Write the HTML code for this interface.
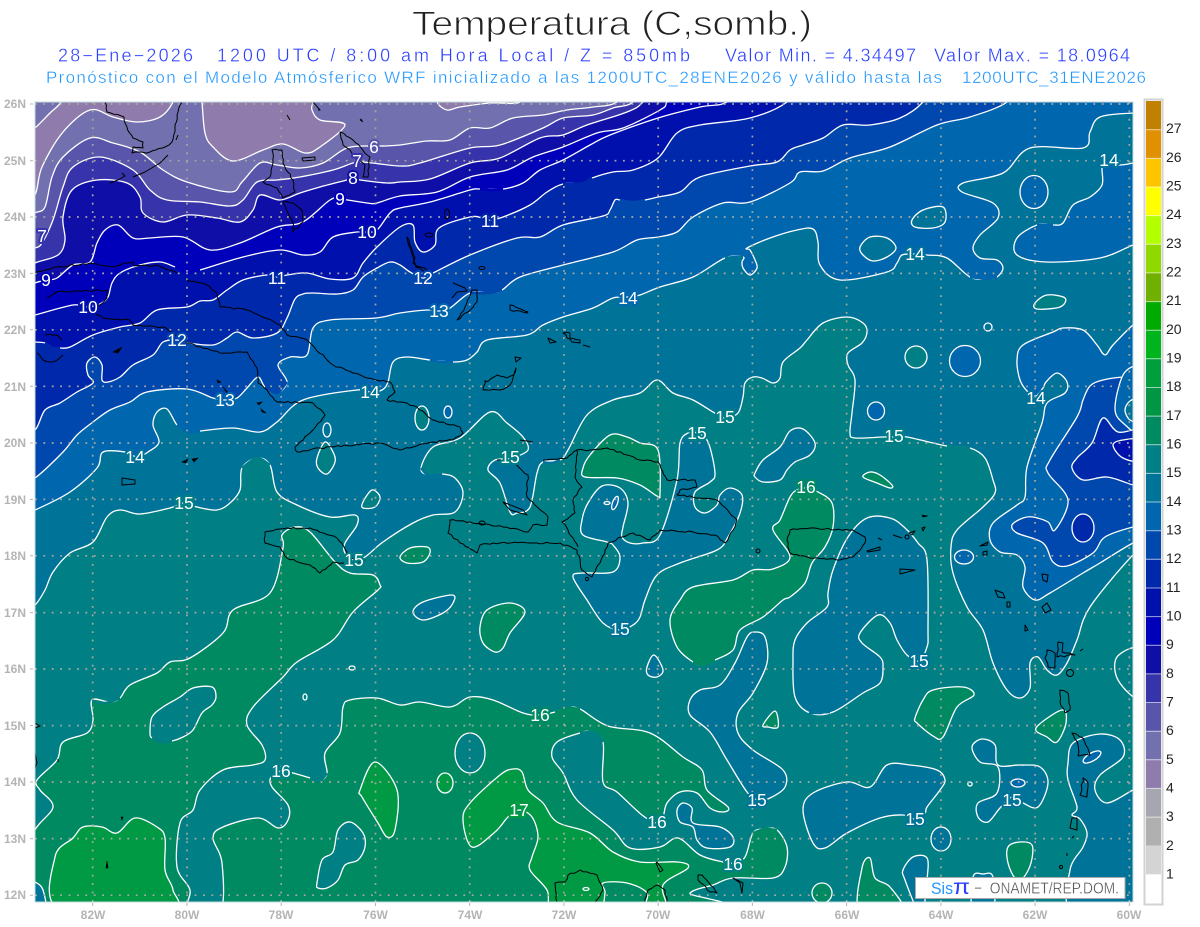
<!DOCTYPE html>
<html lang="es"><head><meta charset="utf-8"><title>Temperatura</title>
<style>
html,body{margin:0;padding:0;background:#fff}
svg{display:block;font-family:"Liberation Sans",sans-serif}
.s{stroke:#fff;stroke-width:1.3;stroke-linejoin:round}
.e{fill:none;stroke-width:2.4;stroke-linecap:butt}
.c4{fill:#8f7bac}.c5{fill:#7270ae}.c6{fill:#5855ab}.c7{fill:#3733aa}.c8{fill:#0f0fa8}.c9{fill:#0000bb}
.c10{fill:#0010ac}.c11{fill:#0028aa}.c12{fill:#0048ae}.c13{fill:#0066ae}.c14{fill:#007399}.c15{fill:#007f85}
.c16{fill:#008a62}.c17{fill:#009a45}
.no{fill:none}
.k{fill:none;stroke:#000;stroke-width:1;stroke-linejoin:round}
.kf{fill:#000;stroke:#000;stroke-width:.6}
.g{stroke:#aaa9a0;stroke-width:1.7;stroke-dasharray:1.8 6.6;fill:none}
.n{fill:#fff;font-size:17.5px;text-anchor:middle;paint-order:stroke;stroke-width:4;stroke-linejoin:round}
.ax{fill:#b4b4b4;font-size:12px;font-weight:bold}
.axb{fill:#b4b4b4;font-size:12px;font-weight:bold;text-anchor:middle}
.cb{fill:#222;font-size:14px}
.t{white-space:pre}
</style></head><body>
<svg width="1200" height="927" viewBox="0 0 1200 927" xmlns="http://www.w3.org/2000/svg">
<defs><clipPath id="c"><rect x="35" y="102" width="1098" height="800"/></clipPath></defs>
<text x="412" y="35" font-size="34" fill="#222" stroke="#fff" stroke-width=".9" textLength="400" lengthAdjust="spacingAndGlyphs">Temperatura (C,somb.)</text>
<g font-size="18" fill="#2a40ff" stroke="#fff" stroke-width=".35">
<text x="58" y="61.5" textLength="135">28−Ene−2026</text>
<text x="217" y="61.5" textLength="473">1200 UTC / 8:00 am Hora Local / Z = 850mb</text>
<text x="725" y="61.5" textLength="191">Valor Min. = 4.34497</text>
<text x="934" y="61.5" textLength="196">Valor Max. = 18.0964</text>
</g>
<g font-size="17" fill="#1e96ff" stroke="#fff" stroke-width=".35">
<text x="46" y="83" textLength="896">Pronóstico con el Modelo Atmósferico WRF inicializado a las 1200UTC_28ENE2026 y válido hasta las</text>
<text x="962" y="83" textLength="184">1200UTC_31ENE2026</text>
</g>

<g clip-path="url(#c)">
<rect x="35" y="102" width="1098" height="800" class="c15"/>
<!-- T>16 main -->
<path class="s c16" d="M45,912 43,890 33,884 28,860 35,830 53,807 40,790 37,780 57,760 63,742 87,733 93,720 92,700 110,702 120,698 130,685 157,673 170,662 190,658 223,633 233,610 270,593 283,548 282,535 295,527 310,532 335,562 350,573 373,575 380,585 378,590 353,612 333,640 297,662 283,677 253,707 247,725 262,745 265,760 253,765 223,770 200,790 193,810 180,823 177,867 190,890 187,912 220,912 222,863 213,838 223,827 258,818 278,828 288,820 288,805 272,787 271,777 281,771 293,773 310,778 320,781 327,773 325,753 340,733 343,707 350,700 377,698 400,705 420,702 450,707 470,697 493,700 523,713 540,715 555,712 568,708 580,709 608,726 650,733 683,757 702,770 707,790 728,807 723,812 710,808 697,793 680,792 667,803 663,817 657,823 642,815 617,792 603,782 603,742 590,732 580,733 557,742 552,757 563,773 577,800 613,830 630,848 660,847 678,838 700,855 723,862 733,863 745,857 753,833 765,829 777,830 787,847 785,867 773,878 733,878 713,885 690,893 685,912Z"/>
<path class="s c15" d="M150,733 152,717 163,707 180,697 193,688 212,687 216,697 212,705 202,713 193,730 183,737 172,741 160,742 152,738Z"/>
<path class="s c15" d="M317,883 322,860 333,852 338,830 350,822 363,833 365,847 358,860 345,865 338,880 327,888 318,888Z"/>
<ellipse class="s c15" cx="470" cy="753" rx="15" ry="20"/>
<ellipse class="s c17" cx="445" cy="783" rx="8" ry="10"/>
<path class="s c17" d="M60,910 55,857 73,838 83,827 102,827 117,833 135,818 157,827 165,838 165,870 173,890 170,910Z"/>
<path class="s c17" d="M360,790 375,762 397,790 395,830 387,837 378,823 362,797Z"/>
<path class="s c17" d="M463,820 470,803 500,775 513,769 522,772 528,790 543,803 557,822 590,833 613,852 640,862 678,862 688,868 663,885 667,910 645,910 647,893 627,883 603,883 605,893 597,910 553,910 547,890 530,870 532,857 538,837 532,817 519,810 508,817 495,832 472,847Z"/>
<!-- T<15 -->
<path class="s c14" d="M25,607 35,605 45,590 53,572 70,553 93,542 107,517 120,510 140,514 170,508 184,503 197,507 217,510 230,503 240,490 242,468 257,458 270,465 277,492 297,505 330,517 355,515 357,525 345,543 345,553 354,560 365,557 383,542 413,523 433,515 455,512 463,493 455,478 442,474 428,475 421,468 433,447 460,438 490,412 507,423 523,437 528,450 512,458 495,460 488,470 500,483 510,512 517,513 530,507 537,473 543,462 560,460 568,450 587,415 613,400 640,393 657,380 673,393 693,400 713,412 725,418 738,413 743,397 745,383 753,377 762,378 773,383 780,378 783,362 800,348 807,340 823,323 847,317 863,323 867,332 862,343 848,353 848,365 855,380 852,413 850,433 855,438 883,437 895,437 907,437 947,446 970,448 985,458 993,480 995,493 983,507 957,530 951,547 953,573 967,607 983,630 993,663 1007,690 1020,698 1030,688 1030,663 1038,657 1047,670 1057,675 1067,663 1077,640 1090,607 1133,555 1150,545 1150,80 20,80 20,607Z"/>
<path class="s c14" d="M573,577 587,600 603,623 620,630 633,625 640,617 645,600 657,575 680,563 717,550 728,537 740,513 742,495 730,488 720,495 717,505 705,513 695,507 695,492 710,482 715,473 708,442 697,433 688,433 680,443 677,480 660,535 643,543 630,543 622,537 623,527 628,503 620,488 602,486 588,503 582,520 583,535 607,542 613,545 620,557 613,572 583,573Z"/>
<path class="s c14" d="M755,473 763,460 780,447 790,431 803,429 815,443 810,455 795,462 787,470 780,480 763,482 755,477Z"/>
<path class="s c14" d="M793,660 795,697 810,713 833,712 863,693 880,683 883,667 880,657 862,643 860,633 878,615 890,623 897,640 907,655 919,661 927,647 928,630 927,560 918,543 905,528 890,518 867,518 848,537 833,570 828,593 827,607 807,623 795,640Z"/>
<path class="s c14" d="M413,612 423,602 452,595 453,603 443,613 423,620Z"/>
<path class="s c14" d="M647,667 654,655 663,670 657,677 648,675Z"/>
<path class="s c14" d="M765,637 767,663 753,693 738,713 738,733 753,750 783,770 785,787 770,798 758,800 747,792 727,760 710,732 690,715 690,700 700,690 720,685 735,663 747,637 755,632Z"/>
<path class="s c14" d="M677,810 683,803 692,808 693,823 720,827 733,837 730,847 707,848 697,840 693,827 680,822Z"/>
<path class="s c14" d="M803,810 813,793 847,782 870,787 887,765 910,765 937,770 945,780 940,790 927,807 925,813 915,819 903,815 880,818 847,833 825,848 813,843Z"/>
<path class="s c14" d="M972,747 982,739 995,745 998,765 1020,765 1040,767 1048,783 1038,807 1023,803 1012,797 1000,808 988,822 978,817 978,803 997,793 998,767 980,762Z"/>
<path class="s c14" d="M1145,785 1133,790 1107,803 1095,790 1100,775 1123,757 1120,740 1100,734 1073,743 1068,763 1068,780 1077,807 1072,815 1080,819 1087,833 1083,847 1070,870 1073,912 1145,912Z"/>
<path class="s c14" d="M903,870 913,857 927,858 927,880 923,912 918,912 905,880Z"/>
<ellipse class="s c14" cx="941" cy="839" rx="10" ry="12"/>
<path class="s c14" d="M973,877 983,874 993,877 993,912 973,912Z"/>
<path class="s c14" d="M35,882 43,890 45,912 25,912 25,880Z"/>
<!-- warm holes in T<15 -->
<path class="s c15" d="M317,458 325,442 333,452 335,462 327,474 318,468Z"/>
<path class="s c15" d="M363,502 372,490 380,497 375,507 363,508Z"/>
<ellipse class="s c15" cx="422" cy="418" rx="7" ry="12"/>
<ellipse class="s no" cx="327" cy="430" rx="4" ry="7"/>
<path class="s c15" d="M1140,650 1117,657 1118,680 1140,698Z"/>
<ellipse class="s c13" cx="448" cy="412" rx="4" ry="6"/>
<ellipse class="s c13" cx="876" cy="411" rx="8.5" ry="9"/>
<ellipse class="s c13" cx="964" cy="557" rx="9.5" ry="7"/>
<ellipse class="s c13" cx="1018" cy="783" rx="7" ry="4"/>
<ellipse class="s c13" cx="1092" cy="757" rx="10" ry="4" transform="rotate(-30 1092 757)"/>
<ellipse class="s c13" cx="615" cy="503" rx="2.5" ry="7" transform="rotate(20 615 503)"/>
<ellipse class="s no" cx="607" cy="503" rx="3" ry="1.5"/>
<ellipse class="s no" cx="970" cy="784" rx="2.2" ry="2"/>
<!-- warm T>16 blobs -->
<path class="s c16" d="M790,557 773,569 753,570 733,580 693,587 680,600 670,620 677,647 693,662 702,665 715,660 733,650 740,630 763,617 783,600 790,597 805,583 812,563 825,547 833,527 832,503 818,492 806,488 797,490 790,497 780,520 773,530Z"/>
<path class="s c16" d="M583,468 590,455 610,435 627,437 640,443 658,450 660,493 657,496 640,485 617,478 585,477Z"/>
<path class="s c16" d="M400,557 410,548 427,547 430,553 423,562 407,563Z"/>
<path class="s c16" d="M863,477 870,472 880,475 892,485 890,488 877,483Z"/>
<path class="s c16" d="M480,627 487,610 510,603 525,612 510,633 503,648 495,652 483,643Z"/>
<path class="s c16" d="M763,725 775,711 778,727 768,727Z"/>
<path class="s c16" d="M915,718 923,700 933,690 963,687 974,695 957,707 943,737 933,736 917,723Z"/>
<path class="s c16" d="M1036,728 1062,710 1066,723 1057,742 1047,737Z"/>
<path class="s c16" d="M1008,847 1020,842 1032,845 1031,863 1023,878 1015,878 1008,863Z"/>
<path class="s c16" d="M870,858 862,868 860,912 903,912 890,887 875,878Z"/>
<circle class="s c16" cx="822" cy="893" r="10"/>
<ellipse class="s no" cx="305" cy="697" rx="2" ry="3"/>
<ellipse class="s no" cx="352" cy="668" rx="3" ry="2"/>
<ellipse class="s no" cx="586" cy="889" rx="3" ry="1.5"/>
<!-- T<14 -->
<path class="s c13" d="M20,515 35,510 70,492 97,468 103,452 125,452 137,457 148,452 159,442 153,425 157,412 167,409 177,425 187,432 200,431 233,428 260,432 277,422 303,400 357,390 370,392 382,390 388,382 393,362 407,357 430,360 453,362 467,360 477,352 487,340 527,335 543,325 563,317 593,308 613,298 628,297 640,295 660,287 693,277 725,258 743,257 742,262 743,268 750,275 757,268 755,260 750,250 747,248 770,238 797,230 813,229 818,242 820,265 840,280 887,272 897,263 902,255 915,254 927,255 947,258 970,277 987,279 997,277 1003,268 997,260 980,258 973,248 980,235 998,218 993,203 962,192 963,183 1003,173 1030,148 1083,148 1090,132 1100,117 1133,113 1150,112 1150,80 20,80Z"/>
<path class="s c13" d="M1145,160 1133,163 1120,165 1105,163 1102,168 1102,185 1090,197 1073,205 1063,223 1053,225 1037,225 1017,238 1017,255 1047,262 1100,258 1133,245 1150,240Z"/>
<path class="s c13" d="M1145,320 1133,325 1113,345 1105,355 1097,345 1083,330 1063,328 1053,332 1023,345 1017,360 1020,380 1028,392 1036,396 1043,388 1046,382 1057,373 1067,382 1065,393 1047,403 1042,423 1027,467 1025,497 1017,505 993,523 990,540 1000,552 1017,555 1025,567 1023,587 1035,600 1050,593 1083,573 1100,563 1133,543 1150,538Z"/>
<ellipse class="s c13" cx="1034" cy="192" rx="14" ry="16.5"/>
<circle class="s c13" cx="965" cy="361" r="15.5"/>
<!-- holes in T<14 -->
<path class="s c14" d="M912,220 923,210 943,207 945,222 933,228 915,227Z"/>
<path class="s c14" d="M860,247 870,237 887,238 896,248 887,257 873,261 863,255Z"/>
<path class="s c15" d="M1035,303 1047,295 1065,298 1060,307 1037,309Z"/>
<circle class="s c15" cx="916" cy="357" r="11"/>
<circle class="s no" cx="988" cy="327" r="4"/>
<!-- T<13 -->
<path class="s c12" d="M20,484 35,478 63,452 77,435 93,422 110,410 130,402 147,392 187,389 213,398 225,400 237,398 247,388 258,377 265,387 277,393 287,382 278,365 290,357 307,355 313,328 330,320 376,318 400,313 427,310 439,311 450,308 470,293 490,293 502,290 520,277 563,265 613,252 637,240 658,237 677,232 693,217 723,203 750,202 790,183 800,172 823,171 850,158 890,147 937,125 970,117 1007,102 1020,80 20,80Z"/>
<path class="s c12" d="M1150,378 1125,377 1103,380 1090,386 1083,400 1077,417 1050,460 1048,473 1068,500 1055,530 1048,522 1033,517 1023,518 1012,525 1017,533 1043,543 1053,562 1067,566 1093,553 1105,537 1133,527 1150,525Z"/>
<path class="s c13" d="M1125,372 1115,407 1123,423 1145,433 1145,372Z"/>
<path class="s c14" d="M1140,400 1130,401 1125,410 1130,420 1140,420Z"/>
<!-- T<12 -->
<path class="s c11" d="M20,432 35,430 45,410 60,403 77,392 93,383 88,375 87,363 95,357 102,365 102,380 108,382 120,377 133,365 153,355 163,342 177,340 188,343 213,345 227,338 237,332 253,338 277,333 287,318 295,299 303,294 313,293 337,294 353,290 363,277 377,268 390,262 400,265 410,272 423,278 435,272 470,255 517,238 540,237 563,225 603,216 610,210 615,200 620,200 633,202 645,200 658,197 680,192 700,177 750,166 777,162 790,150 803,145 823,138 843,125 870,125 900,118 923,102 935,80 20,80Z"/>
<path class="s c11" d="M1072,468 1077,458 1092,443 1103,418 1118,432 1145,433 1145,487 1133,485 1107,477 1083,480Z"/>
<ellipse class="s c11" cx="1083" cy="528" rx="11" ry="14"/>
<path class="s c10" d="M1113,445 1123,440 1145,440 1145,461 1123,458Z"/>
<!-- T<11 -->
<path class="s c10" d="M20,340 35,342 45,343 53,348 60,348 70,347 93,335 120,327 140,323 157,310 187,307 200,301 213,300 227,290 243,280 267,275 277,277 287,275 307,273 330,279 353,278 363,263 377,247 400,227 413,225 415,242 423,252 435,245 439,228 470,217 482,218 490,220 503,217 530,205 547,192 563,184 583,183 592,178 613,172 633,170 658,158 677,133 700,125 750,118 787,102 800,80 20,80Z"/>
<!-- T<10 -->
<path class="s c9" d="M20,318 35,315 73,305 88,307 100,304 108,297 112,283 120,273 140,265 160,262 175,267 187,273 200,270 243,257 280,250 303,255 320,252 333,237 357,232 367,232 377,230 390,213 400,208 430,202 470,190 480,189 503,189 523,183 540,170 563,160 590,145 610,135 658,118 700,107 727,102 740,80 20,80Z"/>
<!-- T<9 -->
<path class="s c8" d="M20,292 35,283 47,280 57,278 73,265 90,262 97,243 105,230 118,225 133,238 150,238 183,237 210,250 240,243 277,227 303,222 330,200 340,199 367,203 377,203 400,196 437,192 470,177 507,170 533,157 563,147 597,133 623,128 660,110 667,102 675,80 20,80Z"/>
<!-- T<8 -->
<path class="s c7" d="M20,272 35,263 58,255 65,240 63,217 72,190 97,180 127,183 140,197 143,213 163,222 187,215 217,218 240,222 253,210 260,195 280,200 300,193 320,187 347,180 353,178 360,180 387,183 400,182 430,179 470,163 500,158 540,138 563,135 587,125 627,112 643,102 655,80 20,80Z"/>
<!-- T<7 -->
<path class="s c6" d="M20,252 35,248 42,243 53,220 63,187 73,167 100,157 133,170 150,190 167,200 200,202 230,206 243,200 257,182 277,180 300,177 333,170 353,163 363,162 400,166 420,163 470,148 500,145 543,128 563,118 593,115 613,108 633,102 645,80 20,80Z"/>
<!-- T<6 -->
<path class="s c5" d="M20,222 35,213 45,207 52,177 63,157 90,138 113,143 140,152 163,170 187,182 230,192 242,182 260,163 277,165 300,168 323,163 347,148 373,146 385,146 400,145 427,141 450,140 470,128 490,128 513,118 543,115 567,110 593,107 617,102 630,80 20,80Z"/>
<!-- T<5 -->
<path class="s c4" d="M20,140 35,128 50,113 61,102 66,85 176,85 173,102 160,117 137,122 113,117 90,110 63,132 42,167 35,195 20,210Z"/>
<path class="s c4" d="M200,85 202,102 205,133 213,147 233,161 263,150 283,144 305,153 320,147 345,125 320,120 312,110 313,102 316,85Z"/>
<path class="s c4" d="M435,85 437,102 447,110 460,107 490,103 520,102 523,85Z"/>

<!-- contour gaps -->
<g>
<path class="e" stroke="#007f85" d="M242,468 257,458 270,465"/>
<path class="e" stroke="#007399" d="M442,474 428,475 421,468"/>
<path class="e" stroke="#007399" d="M543,462 552,463 560,460"/>
<path class="e" stroke="#007f85" d="M92,700 100,703 110,702 120,698"/>
<path class="e" stroke="#007f85" d="M603,742 598,735 590,732 580,733"/>
<path class="e" stroke="#008a62" d="M555,712 568,708 580,709"/>
<path class="e" stroke="#007399" d="M743,257 735,257 725,258"/>
<path class="e" stroke="#007f85" d="M947,446 958,447 970,448"/>
<path class="e" stroke="#008a62" d="M753,833 765,829 777,830"/>
<path class="e" stroke="#0066ae" d="M1053,225 1045,225 1037,225"/>
<path class="e" stroke="#0066ae" d="M970,277 987,279 997,277"/>
<path class="e" stroke="#007f85" d="M172,741 160,742 152,738"/>
<path class="e" stroke="#008a62" d="M693,662 702,665 715,660"/>
<path class="e" stroke="#007f85" d="M310,778 320,781 327,773"/>
<path class="e" stroke="#0066ae" d="M453,362 442,362 430,360"/>
<path class="e" stroke="#0000bb" d="M175,267 187,273 200,270"/>
<path class="e" stroke="#0000bb" d="M480,189 492,190 503,189"/>
<path class="e" stroke="#0028aa" d="M563,184 583,183 592,178"/>
<path class="e" stroke="#0048ae" d="M620,200 633,202 645,200"/>
<path class="e" stroke="#0048ae" d="M470,293 490,293 502,290"/>
<path class="e" stroke="#0028aa" d="M45,343 53,348 60,348"/>
<path class="e" stroke="#0048ae" d="M265,387 277,393 287,382"/>
<path class="e" stroke="#0066ae" d="M177,425 187,432 200,431"/>
<path class="e" stroke="#007399" d="M830,712 810,713 822,713"/>
</g>

<!-- graticule -->
<g class="g">
<path d="M35 104H1133M35 160.7H1133M35 217H1133M35 273.4H1133M35 329.8H1133M35 386.3H1133M35 443H1133M35 499.4H1133M35 555.8H1133M35 612.6H1133M35 669H1133M35 725.6H1133M35 782H1133M35 838.6H1133M35 895.2H1133"/>
<path d="M92.7 102V902M187 102V902M281.2 102V902M375.5 102V902M469.7 102V902M563.9 102V902M658.2 102V902M752.4 102V902M846.6 102V902M940.9 102V902M1035.1 102V902M1129.3 102V902"/>
</g>

<!-- coastlines -->
<g class="k">
<path class="j" d="M105,102 107,112 124,117 127,127 133,138 143,142 143,148 133,147 132,153 150,152 165,147 172,142 175,128 178,112 182,102"/>
<path d="M133,177 145,172 160,163 168,155M178,135 176,140M110,183 118,180 125,176 122,173M287,115 290,120M313,102 320,110 318,110"/>
<path class="j" d="M272,150 282,150 283,163 293,180 295,192 283,198 277,188 263,182 270,177 273,163Z"/>
<path class="j" d="M283,202 293,203 302,210 303,222 293,232 293,223 288,213Z"/>
<path d="M302,158 315,157 315,160 303,161Z"/>
<path class="j" d="M340,132 353,140 370,157 368,177 363,177 365,165 350,150 343,145Z"/>
<path class="j" d="M407,237 415,258 413,263 427,270 426,272 416,267 410,248Z"/>
<ellipse cx="447" cy="214" rx="2.5" ry="5"/><ellipse cx="429" cy="235" rx="4" ry="2"/><ellipse cx="482" cy="268" rx="3" ry="1.5"/>
<path d="M453,283 465,288 467,291 457,292 452,298M457,292 467,291Z"/>
<path class="j" d="M472,290 477,290 477,302 468,312 457,320 465,307Z"/>
<path class="j" d="M510,305 528,312 527,313 510,310Z"/>
<path class="j" d="M563,333 570,333 570,338 580,340 580,343 572,342Z"/>
<path d="M548,338 556,342 550,343Z"/><path d="M583,345 590,347"/><path d="M515,357 521,358 516,362Z"/>
<path class="j" d="M485,380 483,390 500,390 510,385 516,368 514,375 507,378 497,375 485,382"/>
<!-- Cuba -->
<path class="j" d="M35,273 57,267 90,263 113,267 133,262 134,266 157,265 177,273M187,280 207,285 217,293 220,307 247,310 280,325 287,335 307,340 315,348 333,365 353,373 367,378 390,382 395,392 387,400 400,402 417,407 433,420 460,427 463,433 453,440 433,442 413,447 400,450 380,443 320,448 297,452 295,447 313,430 325,415 313,403 277,402 270,395 267,390 258,383 257,368 247,352 220,353 187,343 168,330 163,327 133,325 130,320 103,318 92,312 107,298 107,290 57,292 47,298"/>
<path class="j" d="M45,335 57,335 62,340M37,353 43,360 53,362 63,355"/>
<path d="M122,478 135,480 135,484 122,485Z"/>
<!-- Jamaica -->
<path class="j" d="M265,543 265,532 287,528 310,528 337,538 347,552 345,558 365,560 353,565 333,562 320,573 310,565 287,558 280,547Z"/>
<!-- Hispaniola -->
<path class="j" d="M497,460 513,463 528,475 527,497 548,517 547,525 533,525 528,532 503,527 470,522 450,520 448,533 460,543 477,553 480,545 500,543 533,543 560,543 577,550 582,570 592,577 600,563 608,543 622,537 633,533 650,540 660,530 693,532 715,535 725,543 733,530 737,520 717,500 700,498 677,495 680,490 697,487 695,480 667,480 658,462 640,460 627,455 607,448 593,450 577,450 567,458 543,460"/>
<path class="j" d="M577,450 575,477 582,487 573,500 575,513 562,522 568,530 578,547"/>
<path d="M503,502 523,510 527,515 510,510Z"/><path d="M520,440 533,442"/><ellipse cx="482" cy="523" rx="3" ry="2"/><circle cx="758" cy="551" r="2"/><circle cx="587" cy="579" r="1.6"/>
<!-- PR and E -->
<path class="j" d="M790,530 810,528 853,530 865,537 865,543 853,557 837,560 810,558 790,553 787,540Z"/>
<path d="M878,538 882,540M893,535 902,538"/><circle cx="907" cy="537" r="2"/><path d="M909,533 915,531 912,535Z"/><path d="M922,528 925,527 923,531Z"/>
<path d="M867,551 880,547 880,550 868,552Z"/><path d="M900,569 915,570 900,574Z"/>
<path d="M980,546 988,542 987,545Z"/><path d="M983,552 987,551 987,555 983,555Z"/>
<path d="M995,590 1003,593 1005,598 998,597Z"/><path d="M1007,602 1010,602 1010,607 1007,607Z"/>
<path d="M1042,574 1048,575 1047,582 1043,580Z"/><path d="M1042,607 1047,603 1051,610 1045,613Z"/><path d="M1025,625 1028,630 1025,631Z"/>
<path class="j" d="M1047,650 1055,653 1055,668 1048,667 1045,658Z"/><path class="j" d="M1058,642 1063,643 1062,652 1075,655 1057,657Z"/><circle cx="1070" cy="673" r="3.5"/>
<path class="j" d="M1060,690 1068,693 1070,710 1065,713 1060,702Z"/><path class="j" d="M1072,733 1083,738 1090,755 1078,756 1078,745Z"/><path class="j" d="M1083,778 1088,783 1087,797 1080,795Z"/><path d="M1072,818 1077,818 1077,830 1070,828Z"/>
<path d="M1072,838 1074,836M1067,853 1067,856M1080,651 1083,649"/><circle cx="1061" cy="867" r="1.6"/>
<!-- south -->
<path class="j" d="M557,902 555,883 565,882 568,875 580,870 597,875 603,890 595,902"/>
<path class="j" d="M645,902 648,890 658,885 665,890 667,902"/>
<path d="M657,862 663,870 660,872 656,863Z"/>
<path class="j" d="M698,875 702,875 715,890 717,893 710,892 698,880Z"/>
<path d="M733,878 743,883 742,893 740,883Z"/>
<path d="M35,723 40,726 35,728M35,753 37,763 35,768M58,759 58,762"/>
</g>
<g class="kf">
<path d="M113,352 122,347 118,353Z"/><path d="M182,462 188,459 186,463Z"/><path d="M192,459 198,458 194,462Z"/><path d="M217,380 221,382 218,383Z"/><path d="M223,387 227,393 237,397 231,396Z"/>
<path d="M257,403 262,402 259,405ZM261,409 266,413 262,412Z"/><path d="M122,820 123,817 121,817Z"/><path d="M107,861 108,868 106,868Z"/><path d="M922,515 928,516 923,517Z"/>
<path d="M360,120 363,122 361,119Z"/>
</g>
</g>
<rect x="35" y="102" width="1098" height="800" fill="none" stroke="#c6dbe0" stroke-width="1"/>

<!-- contour labels -->
<g class="n">
<text x="374" y="153" stroke="#5855ab">6</text>
<text x="357" y="167" stroke="#3733aa">7</text>
<text x="353" y="184" stroke="#0f0fa8">8</text>
<text x="340" y="205" stroke="#0000bb">9</text>
<text x="367" y="238" stroke="#0010ac">10</text>
<text x="490" y="227" stroke="#0028aa">11</text>
<text x="423" y="284" stroke="#0048ae">12</text>
<text x="439" y="317" stroke="#0066ae">13</text>
<text x="628" y="304" stroke="#0066ae">14</text>
<text x="42" y="242" stroke="#3733aa">7</text>
<text x="46" y="286" stroke="#0000bb">9</text>
<text x="88" y="313" stroke="#0010ac">10</text>
<text x="277" y="284" stroke="#0028aa">11</text>
<text x="177" y="346" stroke="#0048ae">12</text>
<text x="225" y="406" stroke="#0066ae">13</text>
<text x="370" y="398" stroke="#007399">14</text>
<text x="135" y="463" stroke="#007399">14</text>
<text x="184" y="509" stroke="#007f85">15</text>
<text x="354" y="566" stroke="#007f85">15</text>
<text x="510" y="463" stroke="#007f85">15</text>
<text x="697" y="439" stroke="#007f85">15</text>
<text x="725" y="423" stroke="#007f85">15</text>
<text x="894" y="442" stroke="#007f85">15</text>
<text x="806" y="493" stroke="#008a62">16</text>
<text x="915" y="260" stroke="#007399">14</text>
<text x="1109" y="166" stroke="#007399">14</text>
<text x="1036" y="404" stroke="#007399">14</text>
<text x="620" y="635" stroke="#007399">15</text>
<text x="919" y="667" stroke="#007399">15</text>
<text x="540" y="721" stroke="#008a62">16</text>
<text x="281" y="777" stroke="#007f85">16</text>
<text x="757" y="806" stroke="#007399">15</text>
<text x="519" y="816" stroke="#009a45">17</text>
<text x="657" y="828" stroke="#007f85">16</text>
<text x="733" y="870" stroke="#007f85">16</text>
<text x="915" y="825" stroke="#007399">15</text>
<text x="1012" y="806" stroke="#007399">15</text>
</g>

<!-- label box -->
<rect x="915.5" y="877.5" width="209.5" height="21" fill="#fff" stroke="#aaa" stroke-width="1"/>
<text x="931" y="894" font-size="17" fill="#1e96ff" textLength="22" lengthAdjust="spacingAndGlyphs">Sis</text>
<text x="953" y="894" font-size="21" fill="#2a40ff" textLength="17" lengthAdjust="spacingAndGlyphs">π</text>
<text x="974" y="893.5" font-size="16" fill="#555" class="t" stroke="#fff" stroke-width=".3" textLength="145" lengthAdjust="spacingAndGlyphs">−  ONAMET/REP.DOM.</text>

<!-- axes -->
<g class="ax">
<text x="4" y="108">26N</text><text x="4" y="165">25N</text><text x="4" y="221">24N</text><text x="4" y="278">23N</text><text x="4" y="334">22N</text><text x="4" y="391">21N</text><text x="4" y="447">20N</text><text x="4" y="504">19N</text><text x="4" y="560">18N</text><text x="4" y="617">17N</text><text x="4" y="673">16N</text><text x="4" y="730">15N</text><text x="4" y="786">14N</text><text x="4" y="843">13N</text><text x="4" y="899">12N</text>
</g>
<path stroke="#b4b4b4" stroke-width="1" fill="none" d="M30 104H33M30 160.7H33M30 217H33M30 273.4H33M30 329.8H33M30 386.3H33M30 443H33M30 499.4H33M30 555.8H33M30 612.6H33M30 669H33M30 725.6H33M30 782H33M30 838.6H33M30 895.2H33M92.7 903V906M187 903V906M281.2 903V906M375.5 903V906M469.7 903V906M563.9 903V906M658.2 903V906M752.4 903V906M846.6 903V906M940.9 903V906M1035.1 903V906M1129.3 903V906"/>
<g class="axb">
<text x="93" y="919">82W</text><text x="187" y="919">80W</text><text x="281" y="919">78W</text><text x="375.5" y="919">76W</text><text x="470" y="919">74W</text><text x="564" y="919">72W</text><text x="658" y="919">70W</text><text x="752.5" y="919">68W</text><text x="847" y="919">66W</text><text x="941" y="919">64W</text><text x="1035" y="919">62W</text><text x="1129" y="919">60W</text>
</g>

<!-- colour bar -->
<rect x="1144.5" y="99.5" width="18" height="805" fill="#fff" stroke="#d2d2d2" stroke-width="2"/>
<g>
<rect x="1146" y="101" width="15" height="28.7" fill="#c08000"/>
<rect x="1146" y="129.7" width="15" height="28.7" fill="#e09000"/>
<rect x="1146" y="158.4" width="15" height="28.6" fill="#ffc400"/>
<rect x="1146" y="187" width="15" height="28.6" fill="#ffff00"/>
<rect x="1146" y="215.6" width="15" height="28.7" fill="#b4ff00"/>
<rect x="1146" y="244.3" width="15" height="28.6" fill="#8fd800"/>
<rect x="1146" y="272.9" width="15" height="28.7" fill="#70b000"/>
<rect x="1146" y="301.6" width="15" height="28.6" fill="#00aa00"/>
<rect x="1146" y="330.2" width="15" height="28.6" fill="#00b41e"/>
<rect x="1146" y="358.8" width="15" height="28.7" fill="#009e3c"/>
<rect x="1146" y="387.5" width="15" height="28.6" fill="#009645"/>
<rect x="1146" y="416.1" width="15" height="28.7" fill="#008a62"/>
<rect x="1146" y="444.8" width="15" height="28.6" fill="#007f85"/>
<rect x="1146" y="473.4" width="15" height="28.6" fill="#007399"/>
<rect x="1146" y="502" width="15" height="28.7" fill="#0066ae"/>
<rect x="1146" y="530.7" width="15" height="28.6" fill="#0048ae"/>
<rect x="1146" y="559.3" width="15" height="28.7" fill="#0028aa"/>
<rect x="1146" y="588" width="15" height="28.6" fill="#0010ac"/>
<rect x="1146" y="616.6" width="15" height="28.6" fill="#0000bb"/>
<rect x="1146" y="645.2" width="15" height="28.7" fill="#0f0fa8"/>
<rect x="1146" y="673.9" width="15" height="28.6" fill="#3733aa"/>
<rect x="1146" y="702.5" width="15" height="28.7" fill="#5855ab"/>
<rect x="1146" y="731.2" width="15" height="28.6" fill="#7270ae"/>
<rect x="1146" y="759.8" width="15" height="28.6" fill="#8f7bac"/>
<rect x="1146" y="788.4" width="15" height="28.7" fill="#a6a6b0"/>
<rect x="1146" y="817.1" width="15" height="28.6" fill="#b0b0b0"/>
<rect x="1146" y="845.7" width="15" height="28.7" fill="#d4d4d4"/>
<rect x="1146" y="874.4" width="15" height="28.6" fill="#ffffff"/>
</g>
<path stroke="#fff" stroke-opacity=".6" stroke-width="1" d="M1146 129.7H1161M1146 158.4H1161M1146 187H1161M1146 215.6H1161M1146 244.3H1161M1146 272.9H1161M1146 301.6H1161M1146 330.2H1161M1146 358.8H1161M1146 387.5H1161M1146 416.1H1161M1146 444.8H1161M1146 473.4H1161M1146 502H1161M1146 530.7H1161M1146 559.3H1161M1146 588H1161M1146 616.6H1161M1146 645.2H1161M1146 673.9H1161M1146 702.5H1161M1146 731.2H1161M1146 759.8H1161M1146 788.4H1161M1146 817.1H1161"/>
<g class="cb">
<text x="1166" y="133">27</text><text x="1166" y="162">26</text><text x="1166" y="190.5">25</text><text x="1166" y="219">24</text><text x="1166" y="248">23</text><text x="1166" y="276.5">22</text><text x="1166" y="305">21</text><text x="1166" y="334">20</text><text x="1166" y="362.5">19</text><text x="1166" y="391">18</text><text x="1166" y="420">17</text><text x="1166" y="448.5">16</text><text x="1166" y="477">15</text><text x="1166" y="506">14</text><text x="1166" y="534.5">13</text><text x="1166" y="563">12</text><text x="1166" y="592">11</text><text x="1166" y="620.5">10</text>
<text x="1166" y="649">9</text><text x="1166" y="678">8</text><text x="1166" y="706.5">7</text><text x="1166" y="735">6</text><text x="1166" y="764">5</text><text x="1166" y="792.5">4</text><text x="1166" y="821">3</text><text x="1166" y="850">2</text><text x="1166" y="878.5">1</text>
</g>
</svg>
<script>
document.querySelectorAll('path.s,path.e').forEach(function(p){
  var d=p.getAttribute('d'),closed=/Z/.test(d),n=d.match(/-?[\d.]+/g).map(Number),a=[];
  for(var i=0;i<n.length;i+=2)a.push([n[i],n[i+1]]);
  var L=a.length,o='M'+a[0][0]+' '+a[0][1],m=closed?L:L-1;
  function g(i){return closed?a[(i+L)%L]:a[Math.max(0,Math.min(L-1,i))];}
  for(var j=0;j<m;j++){
    var P0=g(j-1),P1=g(j),P2=g(j+1),P3=g(j+2);
    o+='C'+(P1[0]+(P2[0]-P0[0])/6).toFixed(1)+' '+(P1[1]+(P2[1]-P0[1])/6).toFixed(1)+' '+(P2[0]-(P3[0]-P1[0])/6).toFixed(1)+' '+(P2[1]-(P3[1]-P1[1])/6).toFixed(1)+' '+P2[0]+' '+P2[1];
  }
  p.setAttribute('d',o+(closed?'Z':''));
});
/* roughen coastlines */
document.querySelectorAll('path.j').forEach(function(p){
  var out='',seed=1;
  p.getAttribute('d').split('M').filter(Boolean).forEach(function(sub){
    var closed=/Z/.test(sub),n=sub.match(/-?[\d.]+/g).map(Number),a=[];
    for(var i=0;i<n.length;i+=2)a.push([n[i],n[i+1]]);
    if(closed)a.push(a[0]);
    out+='M'+a[0][0]+' '+a[0][1];
    for(var k=1;k<a.length;k++){
      var A=a[k-1],B=a[k],dx=B[0]-A[0],dy=B[1]-A[1],len=Math.hypot(dx,dy)||1,st=Math.max(1,Math.round(len/3.5));
      for(var q=1;q<=st;q++){
        seed++;
        var w=q===st?0:Math.sin(seed*12.9898)*43758.5453,r=q===st?0:((w-Math.floor(w))-.5)*1.8;
        out+='L'+(A[0]+dx*q/st-dy/len*r).toFixed(1)+' '+(A[1]+dy*q/st+dx/len*r).toFixed(1);
      }
    }
    if(closed)out+='Z';
  });
  p.setAttribute('d',out);
});
</script>
</body></html>
